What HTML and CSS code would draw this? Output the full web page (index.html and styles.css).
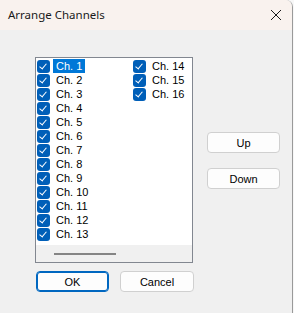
FILE: index.html
```html
<!DOCTYPE html>
<html lang="en">
<head>
  <meta charset="UTF-8">
  <title>Arrange Channels</title>
  <link rel="stylesheet" href="styles.css">
</head>
<body>
  <div class="dialog">
    <div class="titlebar">
      <span class="title">Arrange Channels</span>
      <svg class="close" width="12" height="12" viewBox="0 0 12 12">
        <path d="M1 1 L11 11 M11 1 L1 11" stroke="#1a1a1a" stroke-width="1" fill="none"/>
      </svg>
    </div>

    <div class="content">
      <div class="main-row">
        <div class="listbox">
          <div class="items">
            <div class="item"><span class="cb"></span><span class="label selected">Ch. 1</span></div>
            <div class="item"><span class="cb"></span><span class="label">Ch. 2</span></div>
            <div class="item"><span class="cb"></span><span class="label">Ch. 3</span></div>
            <div class="item"><span class="cb"></span><span class="label">Ch. 4</span></div>
            <div class="item"><span class="cb"></span><span class="label">Ch. 5</span></div>
            <div class="item"><span class="cb"></span><span class="label">Ch. 6</span></div>
            <div class="item"><span class="cb"></span><span class="label">Ch. 7</span></div>
            <div class="item"><span class="cb"></span><span class="label">Ch. 8</span></div>
            <div class="item"><span class="cb"></span><span class="label">Ch. 9</span></div>
            <div class="item"><span class="cb"></span><span class="label">Ch. 10</span></div>
            <div class="item"><span class="cb"></span><span class="label">Ch. 11</span></div>
            <div class="item"><span class="cb"></span><span class="label">Ch. 12</span></div>
            <div class="item"><span class="cb"></span><span class="label">Ch. 13</span></div>
            <div class="item"><span class="cb"></span><span class="label">Ch. 14</span></div>
            <div class="item"><span class="cb"></span><span class="label">Ch. 15</span></div>
            <div class="item"><span class="cb"></span><span class="label">Ch. 16</span></div>
          </div>
          <div class="hscroll"><div class="thumb"></div></div>
        </div>

        <div class="side">
          <button class="btn btn-up">Up</button>
          <button class="btn">Down</button>
        </div>
      </div>

      <div class="bottom-row">
        <button class="btn btn-default">OK</button>
        <button class="btn btn-cancel">Cancel</button>
      </div>
    </div>
  </div>
</body>
</html>
```
FILE: styles.css
```css
body {
  margin: 0;
  padding: 0;
  background-color: #f7f7f7;
  font-family: "Liberation Sans", Arial, sans-serif;
  font-size: 11px;
  color: #000;
}
.dialog {
  width: 292px;
  height: 313px;
  background-color: #f0f0f0;
  border-right: 1px solid #9a9a9a;
  border-top-right-radius: 7px;
  overflow: hidden;
}
.titlebar {
  height: 30px;
  background-color: #f9f2ee;
  display: flex;
  align-items: center;
  justify-content: space-between;
  padding: 0 10px 0 8px;
}
.title {
  font-family: "Noto Sans", "Open Sans", sans-serif;
  font-size: 11.5px;
  color: #1a1a1a;
  margin-top: -1px;
}
.close {
  margin-top: -1px;
}
.content {
  padding: 27px 0 0 35px;
}
.main-row {
  display: flex;
}
.listbox {
  width: 156px;
  height: 204px;
  border: 1px solid #828790;
  background-color: #fff;
  display: flex;
  flex-direction: column;
}
.items {
  flex: 1;
  display: grid;
  grid-auto-flow: column;
  grid-template-rows: repeat(13, 14px);
  grid-template-columns: 96px 60px;
  padding: 1px 0 0 1px;
}
.item {
  display: flex;
  align-items: center;
  height: 14px;
}
.cb {
  position: relative;
  width: 13px;
  height: 13px;
  border-radius: 3px;
  background-color: #005fb8;
  flex-shrink: 0;
}
.cb::after {
  content: "";
  position: absolute;
  left: 4px;
  top: 2px;
  width: 3px;
  height: 6px;
  border-right: 1px solid #fff;
  border-bottom: 1px solid #fff;
  transform: rotate(40deg);
}
.label {
  margin-left: 3px;
  padding: 0 3px;
  line-height: 14px;
}
.label.selected {
  background-color: #0078d7;
  color: #fff;
}
.hscroll {
  height: 17px;
  background-color: #f0f0f0;
  display: flex;
  align-items: center;
}
.thumb {
  width: 62px;
  height: 2px;
  margin-left: 18px;
  background-color: #858585;
}
.side {
  display: flex;
  flex-direction: column;
  gap: 15px;
  margin-left: 14px;
  padding-top: 75px;
}
.btn {
  width: 73px;
  height: 21px;
  padding: 0;
  background-color: #fdfdfd;
  border: 1px solid #d0d0d0;
  border-radius: 4px;
  font-family: "Liberation Sans", Arial, sans-serif;
  font-size: 11px;
  color: #000;
}
.btn-default {
  border: 1px solid #0067c0;
  box-shadow: inset 0 0 0 1px #0067c0;
}
.bottom-row {
  display: flex;
  gap: 11px;
  margin: 8px 0 0 1px;
}
.btn-cancel {
  width: 74px;
}
```
